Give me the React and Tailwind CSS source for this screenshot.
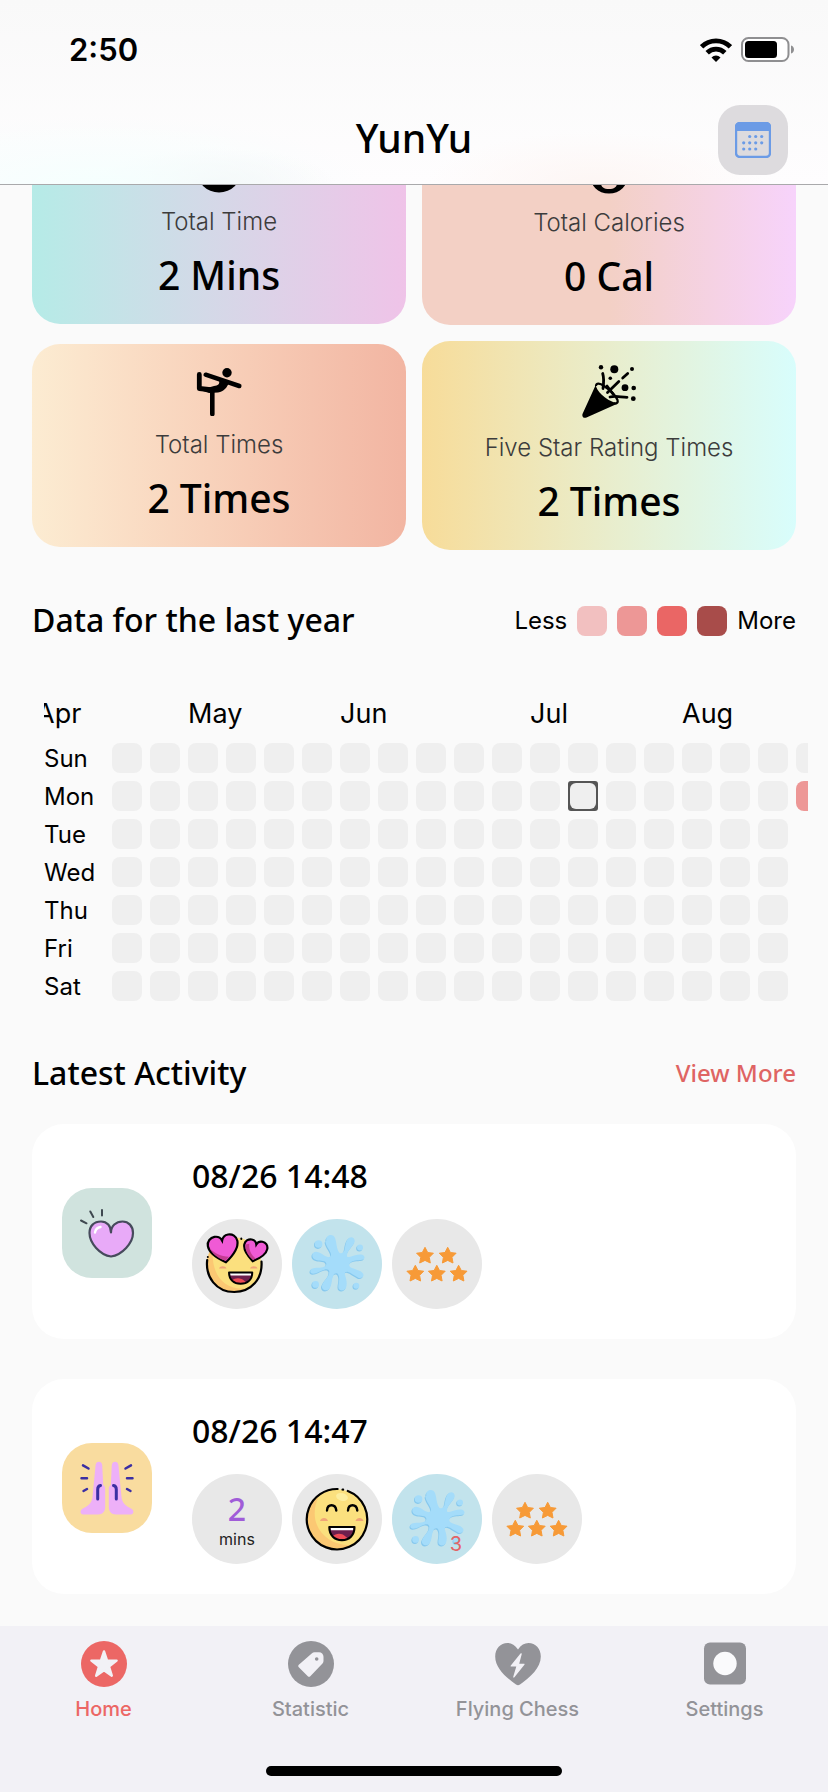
import React, { useState } from "react";

const DAYS = ["Sun", "Mon", "Tue", "Wed", "Thu", "Fri", "Sat"];

const MONTHS = [
  { name: "Apr", col: "col-start-1" },
  { name: "May", col: "col-start-5" },
  { name: "Jun", col: "col-start-9" },
  { name: "Jul", col: "col-start-14" },
  { name: "Aug", col: "col-start-18" },
];

const LEVELS = ["bg-[#f2c0c0]", "bg-[#ed9796]", "bg-[#ea6665]", "bg-[#a84c4a]"];

// 18 full weeks, then the current week that only has Sun and Mon
const WEEKS = [...Array(18).fill([0, 0, 0, 0, 0, 0, 0]), [0, 2]];

const StopwatchIcon = () => (
  <svg width="48" height="56" viewBox="0 0 48 56">
    <circle cx="24" cy="29" r="22.500" />
    <path d="M18 1h12v4H18zM22 4h4v5h-4z" />
    <path d="M24 29V17" stroke="#d0dbe8" strokeWidth="3" strokeLinecap="round" />
  </svg>
);

const FlameIcon = () => (
  <svg width="48" height="58" viewBox="0 0 48 58">
    <path
      fillRule="evenodd"
      d="M26 3c3 9 17 15 17 31 0 12-8 19.500-19 19.500S5 46 5 34c0-8 4-12 7-16 1 4 3 6 5 7 1-8 3-15 9-22zM24 31c-5 5-8 8-8 12s3 6 8 6 8-2 8-6-3-7-8-12z"
    />
  </svg>
);

const YogaIcon = () => (
  <svg width="48" height="48" viewBox="0 0 48 48" fill="none" stroke="#000" strokeLinecap="round" strokeLinejoin="round">
    <circle cx="32" cy="4.700" r="4.700" fill="#000" stroke="none" />
    <path d="M10.700 6.700 44.300 18" strokeWidth="4.500" />
    <path d="M4.300 6.500v14l14 1.500" strokeWidth="4.800" />
    <path d="M24 12l10 3c-2 4-5 9-11 9.500l-9 .5-9-3 14-4c4-.5 6-1.500 5-6z" fill="#000" stroke="none" />
    <path d="M17.300 24v22" strokeWidth="4.600" />
  </svg>
);

const PartyIcon = () => (
  <svg width="54" height="54" viewBox="0 0 54 54">
    <path d="M.6 48.800 13.700 20c1 6 8 14 21.600 18.700L4.500 52.600C1.500 53.500-.4 51.500.6 48.800z" />
    <path d="M14 21c0-3.500 4-3 8 0 6 4 12 10 13.500 14 1 3-1.500 4-4 3" fill="none" stroke="#000" strokeWidth="2.200" />
    <g fill="none" stroke="#000" strokeWidth="2.800" strokeLinecap="round">
      <path d="M20.700 8.500c1.500 5 1 10 .3 15" />
      <path d="M45.700 8.500l-5 4.500M36.800 16.500 25.500 27.500" />
      <path d="M28 32c6-1.500 11 .3 17 .3" />
      <path d="M25 21l6 8" />
    </g>
    <circle cx="19" cy="2.300" r="2.200" />
    <circle cx="32.300" cy="4.300" r="4" />
    <circle cx="50" cy="4" r="2" />
    <circle cx="28.300" cy="13.300" r="1.800" />
    <circle cx="43" cy="22.700" r="3.400" />
    <circle cx="51.700" cy="23" r="2.300" />
    <circle cx="51.300" cy="33.700" r="2.400" />
  </svg>
);

const CalendarIcon = () => (
  <svg width="36" height="36" viewBox="0 0 36 36" fill="#6b9be6">
    <rect x="1" y="1" width="34" height="34" rx="4" fill="none" stroke="#6b9be6" strokeWidth="2.400" />
    <path d="M0 9V5a5 5 0 0 1 5-5h26a5 5 0 0 1 5 5v4z" />
    <circle cx="14.700" cy="14.500" r="1.600" />
    <circle cx="20.700" cy="14.500" r="1.600" />
    <circle cx="26.700" cy="14.500" r="1.600" />
    <circle cx="8.700" cy="20.800" r="1.600" />
    <circle cx="14.700" cy="20.800" r="1.600" />
    <circle cx="20.700" cy="20.800" r="1.600" />
    <circle cx="26.700" cy="20.800" r="1.600" />
    <circle cx="8.700" cy="27" r="1.600" />
    <circle cx="14.700" cy="27" r="1.600" />
    <circle cx="20.700" cy="27" r="1.600" />
  </svg>
);

const WifiIcon = () => (
  <svg width="32" height="24" viewBox="0 0 32 24" fill="none" stroke="#000" strokeWidth="4.800">
    <path d="M1.600 8.800a20.500 20.500 0 0 1 28.800 0" />
    <path d="M7.200 14.800a12.500 12.500 0 0 1 17.600 0" />
    <path d="M16 24l-4.500-4.600a6.500 6.500 0 0 1 9 0z" fill="#000" stroke="none" />
  </svg>
);

const BatteryIcon = () => (
  <svg width="54" height="25" viewBox="0 0 54 25">
    <rect x="1" y="1" width="46.500" height="23" rx="6.500" fill="#fff" stroke="#8f8f91" strokeWidth="2" />
    <rect x="4" y="4" width="32" height="17" rx="3.500" />
    <path d="M50 8.500c4 1 4 7 0 8z" fill="#8f8f91" />
  </svg>
);

const HeartIcon = () => (
  <svg width="90" height="90" viewBox="0 0 90 90" strokeLinecap="round" strokeLinejoin="round">
    <path
      d="M49 44.500C49 38 45 33.500 39 33.500c-7 0-11.500 4.500-11.500 11.500C27.500 55 38 67 49 68.500 60 67 71 55 71 45c0-7-4.500-11.500-10.500-11.500C54 33.500 49 38 49 44.500z"
      fill="#e8aaf8"
      stroke="#464a5c"
      strokeWidth="2.200"
    />
    <path d="M33 44.500c.5-3 2.500-5 5.500-5.500" fill="none" stroke="#fff" strokeWidth="2.400" />
    <path d="M40 22v5.500M28.300 23.500l3 5.500M19 32.500l5.500 2.800" stroke="#3f4850" strokeWidth="2" />
  </svg>
);

const HandsIcon = () => (
  <svg width="90" height="90" viewBox="0 0 90 90" strokeLinecap="round">
    <path
      d="M33.600 22c.3-4.500 6.300-4.500 6.600 0l1 20c1.500 1 2 2 2 4v18c0 5-3 7.400-7 7.400H21c-2.800 0-3.300-4-.8-5.400C26 63 30 60 30.500 54z"
      fill="#edb0f8"
    />
    <path
      d="M56.400 22c-.3-4.500-6.300-4.500-6.600 0l-1 20c-1.500 1-2 2-2 4v18c0 5 3 7.400 7 7.400H69c2.800 0 3.300-4 .8-5.400C64 63 60 60 59.500 54z"
      fill="#edb0f8"
    />
    <g fill="none" stroke="#3b2fa3" strokeWidth="3">
      <path d="M35.700 56V46.500c0-2.500 1-3.700 2.800-4M54.300 56V46.500c0-2.500-1-3.700-2.800-4" />
      <path d="M21 22.300l5.500 3.200M19.500 35.300h5.500M21.500 48l3.500-2M69 22.300l-5.500 3.200M70.500 35.300H65M68.500 48L65 46" strokeWidth="2.500" />
    </g>
  </svg>
);

const Mouth = () => (
  <>
    <path d="M0 0h24c0 8-5 12.500-12 12.500S0 8 0 0z" fill="#6d1f4d" />
    <path d="M3 9c4-4 10-3 13 .5l2 1.500c-5 3-11 2-15-2z" fill="#ee4a56" />
    <path d="M1 0h22v3.200H1.500z" fill="#fff" />
    <path d="M0 0h24c0 8-5 12.500-12 12.500S0 8 0 0z" fill="none" stroke="#000" strokeWidth="2" strokeLinejoin="round" />
  </>
);

const HEART = "M0 14C-9 8-15 1-15-5c0-5 4-8 8-8 3 0 6 2 7 5 1-3 4-5 7-5 4 0 8 3 8 8C15 1 9 8 0 14z";

const LoveEmoji = () => (
  <svg width="90" height="90" viewBox="0 0 90 90">
    <circle cx="42" cy="45.500" r="27.300" fill="#fbe07e" />
    <path d="M17 34c-7 18 3 37 23 38.500 8 .5 13-1.500 16-3.500-22 4-38-12-35-40z" fill="#fbc873" />
    <path d="M15.200 41c-2 17 9 32 27 32 17 0 28.500-13 27.300-30.500" fill="none" stroke="#000" strokeWidth="2.200" strokeLinecap="round" />
    <path d="M49.300 20v-.5M15.800 38v-.1" stroke="#000" strokeWidth="2" strokeLinecap="round" />
    <g transform="translate(31.500 29.500) rotate(-10)">
      <path d={HEART} fill="#f05ad5" stroke="#000" strokeWidth="2.200" />
      <path d="M-13.500-3C-12 3-8 8 0 12.500L4 9C-4 7-10 3-13.500-3z" fill="#c53c92" />
    </g>
    <g transform="translate(63 31.500) rotate(12) scale(.78)">
      <path d={HEART} fill="#f05ad5" stroke="#000" strokeWidth="2.800" />
      <path d="M-13.500-5C-13 2-8 8 0 12.500L3 10C-4 6-8 1-9-7z" fill="#c53c92" />
    </g>
    <path d="M27 49.500c1-3 6.500-3 7.500 0zM58 49.500c1-3 6.500-3 7.500 0z" fill="#f0a478" />
    <g transform="translate(37 53.500) scale(.97 .9)">
      <Mouth />
    </g>
  </svg>
);

const LaughEmoji = () => (
  <svg width="90" height="90" viewBox="0 0 90 90">
    <circle cx="45" cy="45.200" r="30" fill="#fbe07e" />
    <path d="M27 22C8 38 14 68 38 74c10 2 17-.5 21-3C32 72 14 48 27 22z" fill="#fbc873" />
    <ellipse cx="50" cy="23" rx="6" ry="3.800" fill="#fdeea0" transform="rotate(15 50 23)" />
    <circle
      cx="45"
      cy="45.200"
      r="30.200"
      fill="none"
      stroke="#000"
      strokeWidth="2.200"
      strokeDasharray="179 5 .5 5.250"
      strokeLinecap="round"
      transform="rotate(-69 45 45.200)"
    />
    <path d="M35 36.500c.5-7 8.500-7 9.300 0M56 36.500c.5-7 8.500-7 9.300 0" fill="none" stroke="#000" strokeWidth="2.400" strokeLinecap="round" />
    <path d="M28 47c1-4 7-4 8 0zM63.500 47c1-4 7-4 8 0z" fill="#f0a478" />
    <g transform="translate(37.300 53) scale(1.050)">
      <Mouth />
    </g>
  </svg>
);

// each arm widens into a drop at its outer end
const SplashShape = () => (
  <g>
    <path d="M34 22c-1-6 7-8 9-2 1.500 5 1 9 4 14 2 1.500 4 0 5-2 1-4 1-8 3-11 3-5 9-2 7 3-2 4-6 7-7 11-1 3 0 4 3 3 4-1 8-3 12-2 3 1 3 4.500 0 5-5 1-9 0-12 3-2 2-1 4 1 5 4 2 8 2 11 5 3 3 0 6-4 5-4-2-7-5-11-6-3 0-3 2-2 4 1 4 2 7 1 11-1 5-8 5-8 0 0-4 2-8 0-12-1-2-4-2-5 1-2 4-1 9-4 13-4 4-9 0-7-4 2-5 7-8 7-13 0-2-2-3-5-2-4 1-7 4-11 4-4 0-4-5 0-5.500 4-1 9 0 12-2 2-2 1-4-1-5-4-1-8 0-11-3-3-4 1-8 5-6 4 1 7 5 11 5 2-1 2-3 1-5-2-4-4-6-5-10.500z" />
    <circle cx="26.300" cy="25.300" r="3.800" />
    <circle cx="67.700" cy="28.700" r="3" />
    <circle cx="23.300" cy="65.700" r="3.400" />
    <circle cx="64" cy="67" r="3" />
  </g>
);

const SplashIcon = () => (
  <svg width="90" height="90" viewBox="0 0 90 90" fill="currentColor">
    <g className="text-[#86c8ee]" transform="translate(-.5 .8)">
      <SplashShape />
    </g>
    <g className="text-[#a4dcfa]" transform="translate(.3 -.3)">
      <SplashShape />
    </g>
  </svg>
);

const STARS = [[33, 36.5], [55.7, 36.5], [23.3, 54.5], [44.8, 54.5], [66.6, 54.5]];

const StarsIcon = () => (
  <svg width="90" height="90" viewBox="0 0 90 90" fill="#f79a37" stroke="#f79a37" strokeLinejoin="round">
    {STARS.map(([x, y]) => (
      <path key={`${x}-${y}`} transform={`translate(${x} ${y})`} d="M0-8.200 2.700-3 8.400-2.300 4.300 1.800 5.300 7.500 0 4.900-5.300 7.500-4.300 1.800-8.400-2.300-2.700-3z" />
    ))}
  </svg>
);

const HomeIcon = () => (
  <svg width="46" height="46" viewBox="0 0 46 46" fill="currentColor">
    <circle cx="23" cy="23" r="23" />
    <path
      d="M23 10.500l3 9 9.600.1-7.600 5.900 2.800 9.200-7.800-5.500-7.800 5.500 2.800-9.200-7.600-5.900 9.600-.1z"
      fill="#f2f1f6"
      stroke="#f2f1f6"
      strokeWidth="2.400"
      strokeLinejoin="round"
    />
  </svg>
);

const TagIcon = () => (
  <svg width="46" height="46" viewBox="0 0 46 46" fill="currentColor">
    <circle cx="23" cy="23" r="23" />
    <path
      d="M24 12.300c.7-.7 1.500-1 2.500-1h4.500c2.500 0 4.500 2 4.500 4.500V20c0 1-.3 1.800-1 2.500L22.300 35.200c-.7.700-1.800.7-2.500 0l-9-9c-.7-.7-.7-1.800 0-2.500z"
      fill="#f2f1f6"
    />
    <circle cx="28.700" cy="18" r="1.800" />
  </svg>
);

const BoltHeartIcon = () => (
  <svg width="46" height="46" viewBox="0 0 46 46" fill="currentColor">
    <path d="M23 8.500C20 4 16.500 2 12.500 2 5.500 2 .2 7.500.2 15.500.2 27 11 36.500 21 43.600c1.500 1 2.500 1 4 0C35 36.500 45.800 27 45.800 15.500 45.800 7.500 40.500 2 33.500 2 29.500 2 26 4 23 8.500z" />
    <path d="M25.500 12.500 15.800 24.500c-.4.600-.2 1.100.5 1.100h5l-3 10c-.3 1 .5 1.400 1.100.7l10-12.500c.4-.6.200-1.100-.5-1.100h-4.700l2.500-9.500c.3-1-.6-1.400-1.200-.7z" fill="#f2f1f6" />
  </svg>
);

const SettingsIcon = () => (
  <svg width="46" height="46" viewBox="0 0 46 46" fill="currentColor">
    <rect x="2" y="1.500" width="42" height="42" rx="6" />
    <circle cx="23" cy="22.500" r="11.700" fill="#fafafc" />
  </svg>
);

const TABS = [
  { label: "Home", icon: <HomeIcon /> },
  { label: "Statistic", icon: <TagIcon /> },
  { label: "Flying Chess", icon: <BoltHeartIcon /> },
  { label: "Settings", icon: <SettingsIcon /> },
];

const StatCard = ({ icon, iconHeight, label, value, gradient }) => (
  <div className={`flex flex-col items-center rounded-[28px] pt-5 pb-[25px] ${gradient}`}>
    <div className={`flex items-center justify-center ${iconHeight}`}>{icon}</div>
    <p className="mt-[11px] text-[24px] leading-7 font-light text-[#3c3c3c]">{label}</p>
    <p className="mt-[15px] font-['Noto_Sans',sans-serif] text-[39px] leading-[48px] font-medium">{value}</p>
  </div>
);

const SectionTitle = ({ children }) => (
  <h2 className="font-['Noto_Sans',sans-serif] text-[32px] leading-10 font-medium">{children}</h2>
);

const Bubble = ({ color = "bg-[#e8e8e8]", children }) => (
  <li className={`relative flex h-[90px] w-[90px] flex-col items-center justify-center rounded-full ${color}`}>{children}</li>
);

const ActivityCard = ({ icon, iconColor, time, children }) => (
  <article className="flex items-center gap-10 rounded-[32px] bg-white px-[30px] pt-8 pb-[30px]">
    <div className={`h-[90px] w-[90px] shrink-0 rounded-[30px] ${iconColor}`}>{icon}</div>
    <div>
      <h3 className="font-['Noto_Sans',sans-serif] text-[32px] leading-10 font-medium">{time}</h3>
      <ul className="mt-[23px] flex gap-[10px]">{children}</ul>
    </div>
  </article>
);

const Heatmap = () => (
  <div className="mt-[58px] mr-5 ml-11 overflow-hidden">
    <div className="-ml-2 grid auto-cols-[38px] grid-flow-col text-[27px] leading-8">
      {MONTHS.map((m) => (
        <span key={m.name} className={`row-start-1 whitespace-nowrap ${m.col}`}>{m.name}</span>
      ))}
    </div>
    <div className="mt-[13px] flex">
      <div className="flex w-[68px] shrink-0 flex-col gap-2 pt-px text-[24px] leading-[30px]">
        {DAYS.map((d) => (
          <span key={d}>{d}</span>
        ))}
      </div>
      <div className="flex gap-2">
        {WEEKS.map((week, w) => (
          <div key={w} className="flex shrink-0 flex-col gap-2">
            {week.map((level, d) => {
              const selected = w === 12 && d === 1;
              if (selected) {
                return (
                  <div key={d} className="h-[30px] w-[30px] rounded-[3px] bg-[#555] p-[2px]">
                    <div className="h-full rounded-[6px] bg-[#efefef]" />
                  </div>
                );
              }
              return <div key={d} className={`h-[30px] w-[30px] rounded-[8px] ${level ? LEVELS[level - 1] : "bg-[#efefef]"}`} />;
            })}
          </div>
        ))}
      </div>
    </div>
  </div>
);

const App = () => {
  const [activeTab, setActiveTab] = useState("Home");

  return (
    <div className="min-h-screen bg-[#fafafa] font-[Inter,sans-serif] text-black">
      <header className="sticky top-0 z-10 border-b border-[#a9a9ab] bg-[#fcfbfc] bg-[radial-gradient(ellipse_at_12%_100%,#f5fffe_0%,transparent_26%),radial-gradient(ellipse_at_26%_100%,#f3f3f5_0%,transparent_14%),radial-gradient(ellipse_at_72%_100%,#fdf6f4_0%,transparent_20%),linear-gradient(#f9f9f9,#fefdfe)]">
        <div className="flex h-[98px] items-center justify-between pt-px pr-[33px] pl-[69px]">
          <span className="text-[31px] leading-8 font-semibold">2:50</span>
          <div className="flex items-center gap-[9px]">
            <WifiIcon />
            <BatteryIcon />
          </div>
        </div>
        <div className="grid h-[86px] grid-cols-[1fr_auto_1fr] items-center px-10 pb-[2px]">
          <h1 className="col-start-2 pb-1 font-['Noto_Sans',sans-serif] text-[39px] leading-[48px] font-medium">YunYu</h1>
          <button type="button" aria-label="Calendar" className="flex h-[70px] w-[70px] items-center justify-center justify-self-end rounded-[22px] bg-[#dddbde]">
            <CalendarIcon />
          </button>
        </div>
      </header>

      <main className="-mt-[65px] pb-8">
        <section className="grid grid-cols-2 items-center gap-4 px-8">
          <StatCard
            icon={<StopwatchIcon />}
            iconHeight="h-14"
            label="Total Time"
            value="2 Mins"
            gradient="bg-linear-to-r from-[#b5ebe7] to-[#efc3e8]"
          />
          <StatCard
            icon={<FlameIcon />}
            iconHeight="h-[58px]"
            label="Total Calories"
            value="0 Cal"
            gradient="bg-linear-to-r from-[#f3d0c5] from-50% to-[#f7d3fb]"
          />
          <StatCard
            icon={<YogaIcon />}
            iconHeight="h-14"
            label="Total Times"
            value="2 Times"
            gradient="bg-linear-to-r from-[#fcecd2] to-[#f2b5a2]"
          />
          <StatCard
            icon={<PartyIcon />}
            iconHeight="h-[62px]"
            label="Five Star Rating Times"
            value="2 Times"
            gradient="bg-linear-to-r from-[#f7dc99] to-[#d8fdfc]"
          />
        </section>

        <section className="mt-[50px]">
          <div className="flex items-center justify-between px-8">
            <SectionTitle>Data for the last year</SectionTitle>
            <div className="flex items-center gap-[10px] pt-px text-[24px] leading-[30px]">
              <span>Less</span>
              {LEVELS.map((color) => (
                <span key={color} className={`h-[30px] w-[30px] rounded-[8px] ${color}`} />
              ))}
              <span>More</span>
            </div>
          </div>
          <Heatmap />
        </section>

        <section className="mt-[51px] px-8">
          <div className="flex items-center justify-between">
            <SectionTitle>Latest Activity</SectionTitle>
            <a href="#activity" className="font-['Noto_Sans',sans-serif] text-[24px] leading-[30px] font-medium text-[#df6463]">
              View More
            </a>
          </div>
          <div className="mt-[31px] flex flex-col gap-10">
            <ActivityCard icon={<HeartIcon />} iconColor="bg-[#d0e3de]" time="08/26 14:48">
              <Bubble><LoveEmoji /></Bubble>
              <Bubble color="bg-[#c2e3ec]"><SplashIcon /></Bubble>
              <Bubble><StarsIcon /></Bubble>
            </ActivityCard>
            <ActivityCard icon={<HandsIcon />} iconColor="bg-[#f9dc9f]" time="08/26 14:47">
              <Bubble>
                <span className="pt-1 font-['Noto_Sans',sans-serif] text-[32px] leading-9 font-medium text-[#a05cd8]">2</span>
                <span className="text-[16px] leading-6 text-[#222]">mins</span>
              </Bubble>
              <Bubble><LaughEmoji /></Bubble>
              <Bubble color="bg-[#c2e3ec]">
                <SplashIcon />
                <span className="absolute right-5 bottom-2 text-[20px] leading-6 text-[#e36466]">3</span>
              </Bubble>
              <Bubble><StarsIcon /></Bubble>
            </ActivityCard>
          </div>
        </section>
      </main>

      <nav className="sticky bottom-0 z-10 bg-[#f2f1f6] pt-[15px] pb-4">
        <div className="grid grid-cols-4">
          {TABS.map((tab) => (
            <a
              key={tab.label}
              href={`#${tab.label.toLowerCase().replace(" ", "-")}`}
              onClick={() => setActiveTab(tab.label)}
              className={`flex flex-col items-center gap-[10px] text-[20px] leading-6 font-medium ${
                activeTab === tab.label ? "text-[#ec6765]" : "text-[#939398]"
              }`}
            >
              {tab.icon}
              {tab.label}
            </a>
          ))}
        </div>
        <div className="mx-auto mt-[45px] h-[10px] w-[296px] rounded-full bg-black" />
      </nav>
    </div>
  );
};

export default App;
